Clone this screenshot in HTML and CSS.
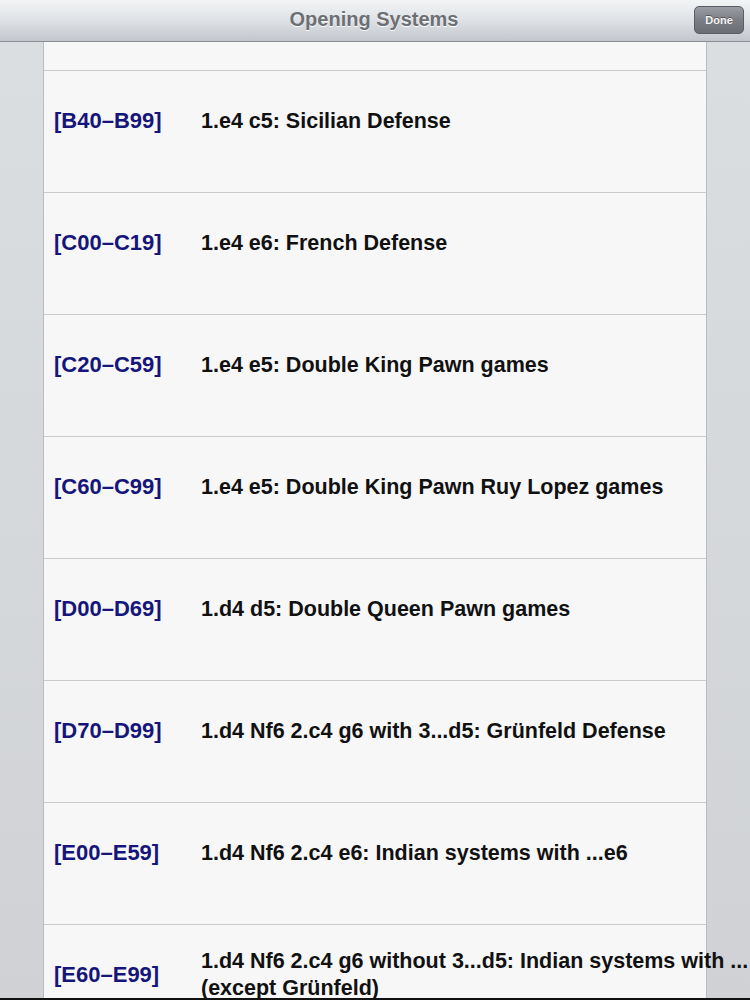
FILE: index.html
```html
<!DOCTYPE html>
<html>
<head>
<meta charset="utf-8">
<link rel="stylesheet" href="styles.css">
</head>
<body>
<div class="screen">
  <header class="navbar">
    <div class="title">Opening Systems</div>
    <button class="done">Done</button>
  </header>
  <div class="content">
    <div class="panel">
      <div class="row row-top"></div>
      <div class="row"><div class="inner"><span class="code">[B40–B99]</span><span class="desc">1.e4 c5: Sicilian Defense</span></div></div>
      <div class="row"><div class="inner"><span class="code">[C00–C19]</span><span class="desc">1.e4 e6: French Defense</span></div></div>
      <div class="row"><div class="inner"><span class="code">[C20–C59]</span><span class="desc">1.e4 e5: Double King Pawn games</span></div></div>
      <div class="row"><div class="inner"><span class="code">[C60–C99]</span><span class="desc">1.e4 e5: Double King Pawn Ruy Lopez games</span></div></div>
      <div class="row"><div class="inner"><span class="code">[D00–D69]</span><span class="desc">1.d4 d5: Double Queen Pawn games</span></div></div>
      <div class="row"><div class="inner"><span class="code">[D70–D99]</span><span class="desc">1.d4 Nf6 2.c4 g6 with 3...d5: Grünfeld Defense</span></div></div>
      <div class="row"><div class="inner"><span class="code">[E00–E59]</span><span class="desc">1.d4 Nf6 2.c4 e6: Indian systems with ...e6</span></div></div>
      <div class="row"><div class="inner"><span class="code">[E60–E99]</span><span class="desc">1.d4 Nf6 2.c4 g6 without 3...d5: Indian systems with ...<br>(except Grünfeld)</span></div></div>
    </div>
  </div>
</div>
</body>
</html>
```
FILE: styles.css
```css
html, body {
  margin: 0;
  padding: 0;
}
body {
  width: 750px;
  height: 1000px;
  overflow: hidden;
  font-family: "Liberation Sans", Arial, sans-serif;
  background: #d6d9dc;
}
.screen {
  width: 750px;
  height: 1000px;
  display: flex;
  flex-direction: column;
  overflow: hidden;
  border-bottom: 2px solid #111;
  box-sizing: border-box;
}
.navbar {
  flex: 0 0 41px;
  height: 41px;
  position: relative;
  display: flex;
  align-items: center;
  justify-content: center;
  background: linear-gradient(#f2f4f5 0%, #e3e6e9 40%, #c3c7cd 100%);
  border-bottom: 1px solid #8a8e96;
}
.title {
  font-size: 20px;
  font-weight: bold;
  color: #6c6f74;
  text-shadow: 0 1px 0 #fff;
  margin-top: -2px;
  margin-left: -2px;
}
.done {
  position: absolute;
  right: 6px;
  top: 6px;
  width: 50px;
  height: 28px;
  border: 1px solid #5a5d63;
  border-radius: 5px;
  background: linear-gradient(#9a9da3 0%, #7b7e84 50%, #6a6d73 100%);
  color: #f4f4f4;
  font-family: "Liberation Sans", Arial, sans-serif;
  font-weight: bold;
  font-size: 11px;
  padding: 0;
  text-shadow: 0 -1px 0 #555;
}
.content {
  flex: 1;
  display: flex;
  justify-content: flex-start;
  padding-left: 43px;
  background: linear-gradient(#dbdee1, #cfd1d4);
  overflow: visible;
}
.panel {
  width: 662px;
  background: #f7f7f8;
  border-left: 1px solid #b9bdc1;
  border-right: 1px solid #b9bdc1;
  flex: 0 0 auto;
}
.row {
  height: 122px;
  border-bottom: 1px solid #c9cacc;
  box-sizing: border-box;
}
.row-top {
  height: 29px;
}
.inner {
  height: 100px;
  display: flex;
  align-items: center;
}
.code {
  flex: 0 0 157px;
  padding-left: 10px;
  box-sizing: border-box;
  color: #15157a;
  font-weight: bold;
  font-size: 22px;
}
.desc {
  color: #111;
  font-weight: bold;
  font-size: 21.5px;
  line-height: 27px;
  white-space: nowrap;
}
```
